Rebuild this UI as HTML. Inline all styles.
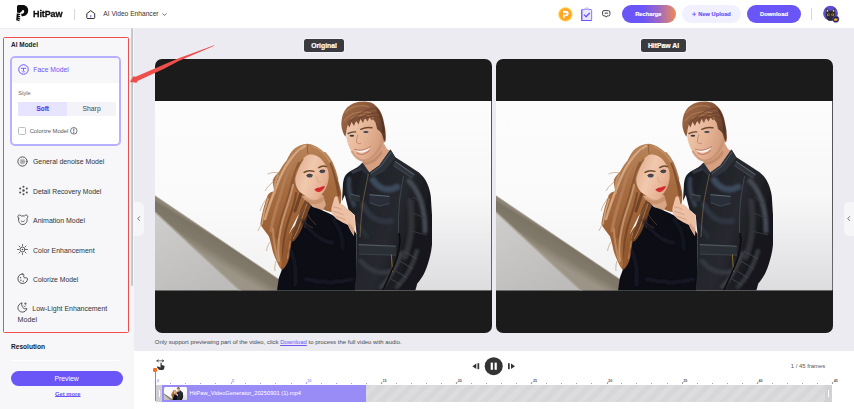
<!DOCTYPE html>
<html lang="en">
<head>
<meta charset="utf-8">
<title>HitPaw AI Video Enhancer</title>
<style>
*{box-sizing:border-box;margin:0;padding:0}
html,body{width:854px;height:409px;overflow:hidden;background:#ebebf1;font-family:"Liberation Sans",sans-serif;color:#333}
#app{position:relative;width:854px;height:409px;overflow:hidden;background:#ebebf1}
.abs{position:absolute}
.t{position:absolute;white-space:nowrap;line-height:1;transform-origin:0 50%;display:block;transform:scaleX(1)}
svg{display:block;overflow:visible}
.t.nb{-webkit-text-stroke:0.15px currentColor}
/* header */
#hdr{left:0;top:0;width:854px;height:28px;background:#fff}
.btn{position:absolute;top:5.3px;height:17.5px;border-radius:9px}
/* sidebar */
#side{left:0;top:28px;width:130.8px;height:381px;background:#f7f7f9;border-top:1px solid #eeeef1}
#sidefill{left:0;top:351px;width:133.5px;height:58px;background:#f7f7f9}
#sbar{left:130.5px;top:28px;width:3px;height:323px;background:#f6f6f8}
#sthumb{left:130.8px;top:28px;width:2.7px;height:257.5px;background:linear-gradient(90deg,#d2d2d6,#bdbdc1);border-radius:1.3px}
#redbox{left:2.7px;top:36.9px;width:126.2px;height:296.4px;border:1.9px solid #ee4f4c;border-radius:1.5px}
#card{left:10.4px;top:56.3px;width:110.8px;height:90.2px;border:2.1px solid #b8b1ff;border-radius:5px;background:#fff;overflow:hidden}
#cardhd{left:0;top:0;width:108px;height:24.6px;background:#f7f7fa}
.mi{color:#333;font-size:7.4px}
.ic{position:absolute;width:11px;height:11px}
.ic *{fill:none;stroke:#4e4e52;stroke-width:1;stroke-linecap:round;stroke-linejoin:round}
.ic .f{fill:#4e4e52;stroke:none}
.ic .f2{fill:#c9c9cc;stroke:#9a9a9e;stroke-width:0.8}
/* main */
.panel{top:58.5px;height:274.5px;background:#1b1b1b;border-radius:7px;overflow:hidden}
.panel svg{position:absolute;left:0;top:42.5px;width:336.5px;height:189.5px}
.tag{top:39px;height:13px;background:#3b3b3f;border-radius:2.5px;color:#fff;font-weight:bold;font-size:6.8px;text-align:center;line-height:13.6px;box-shadow:0 0 0 0.9px rgba(255,255,255,.5);-webkit-text-stroke:0.2px #fff}
#tl{left:133.5px;top:351px;width:720.5px;height:58px;background:#fff}
.tk{position:absolute;top:383.2px;width:1px;height:1.2px;background:#a4a4aa}
.tkM{position:absolute;top:382.3px;width:1px;height:2.3px;background:#8a8a90;transform:skewX(-25deg)}
.tn{position:absolute;top:379.5px;font-size:3.7px;line-height:1;color:#5a5a60;font-weight:bold}
</style>
</head>
<body>
<div id="app">
<svg width="0" height="0" style="position:absolute;left:0;top:0" aria-hidden="true">
<defs>
  <linearGradient id="gBg" x1="0" y1="0" x2="0" y2="1">
    <stop offset="0" stop-color="#fcfcfc"/><stop offset="0.55" stop-color="#fafafa"/><stop offset="1" stop-color="#f1f1f2"/>
  </linearGradient>
  <linearGradient id="gBgR" x1="0" y1="0" x2="0" y2="1">
    <stop offset="0" stop-color="#e0e0e3" stop-opacity="0"/><stop offset="0.5" stop-color="#e0e0e3" stop-opacity="0.1"/><stop offset="1" stop-color="#d6d6da" stop-opacity="0.75"/>
  </linearGradient>
  <linearGradient id="gBand" gradientUnits="userSpaceOnUse" x1="50" y1="128" x2="38" y2="148">
    <stop offset="0" stop-color="#8d8576"/><stop offset="0.12" stop-color="#7b7364"/><stop offset="0.6" stop-color="#817969"/><stop offset="1" stop-color="#9c9587"/>
  </linearGradient>
  <linearGradient id="gConc" x1="0" y1="0" x2="0.6" y2="1">
    <stop offset="0" stop-color="#cfcecc"/><stop offset="1" stop-color="#bdbcba"/>
  </linearGradient>
  <linearGradient id="gHairW" gradientUnits="userSpaceOnUse" x1="135" y1="45" x2="150" y2="170">
    <stop offset="0" stop-color="#b98458"/><stop offset="0.35" stop-color="#a66b3f"/><stop offset="0.7" stop-color="#9a5f34"/><stop offset="1" stop-color="#b0733f"/>
  </linearGradient>
  <linearGradient id="gHairM" gradientUnits="userSpaceOnUse" x1="190" y1="5" x2="231" y2="35">
    <stop offset="0" stop-color="#9c6845"/><stop offset="0.5" stop-color="#84543a"/><stop offset="1" stop-color="#5c3826"/>
  </linearGradient>
  <linearGradient id="gJacket" gradientUnits="userSpaceOnUse" x1="188" y1="60" x2="278" y2="90">
    <stop offset="0" stop-color="#16181d"/><stop offset="0.35" stop-color="#212329"/><stop offset="0.7" stop-color="#27292f"/><stop offset="1" stop-color="#17181c"/>
  </linearGradient>
  <linearGradient id="gSkinM" gradientUnits="userSpaceOnUse" x1="192" y1="30" x2="229" y2="42">
    <stop offset="0" stop-color="#efc6aa"/><stop offset="0.5" stop-color="#e6b395"/><stop offset="0.85" stop-color="#d7a283"/><stop offset="1" stop-color="#c58f70"/>
  </linearGradient>
  <linearGradient id="gSkinW" gradientUnits="userSpaceOnUse" x1="141" y1="70" x2="176" y2="84">
    <stop offset="0" stop-color="#e4b293"/><stop offset="0.35" stop-color="#f1c9ae"/><stop offset="0.8" stop-color="#e7b294"/><stop offset="1" stop-color="#cf9676"/>
  </linearGradient>
  <filter id="b0" x="-10%" y="-10%" width="120%" height="120%"><feGaussianBlur stdDeviation="0.35"/></filter>
  <filter id="b1" x="-10%" y="-10%" width="120%" height="120%"><feGaussianBlur stdDeviation="0.7"/></filter>
  <filter id="b2" x="-20%" y="-20%" width="140%" height="140%"><feGaussianBlur stdDeviation="1.3"/></filter>
  <filter id="b3" x="-30%" y="-30%" width="160%" height="160%"><feGaussianBlur stdDeviation="2.6"/></filter>
  <symbol id="photo" viewBox="0 0 336.5 189.5" preserveAspectRatio="none">
    <rect width="336.5" height="189.5" fill="url(#gBg)"/>
    <rect x="200" y="0" width="136.500" height="189.500" fill="url(#gBgR)"/>
    <!-- ramp -->
    <path d="M0 110 L0 189.500 L87 189.500 Z" fill="url(#gConc)"/>
    <path d="M0 94.600 L124 178.200 L124 189.500 L85 189.500 L0 111 Z" fill="url(#gBand)"/>
    <path d="M0 94.800 L124 178.400" stroke="#b5aea1" stroke-width="0.900" fill="none" filter="url(#b0)"/>
    <path d="M0 111 L85 189.500" stroke="#aaa497" stroke-width="1.600" fill="none" filter="url(#b1)"/>

    <!-- MAN -->
    <g filter="url(#b0)">
      <!-- neck -->
      <path d="M207.500 56 L227.500 40 L232 48 L235.500 50 L227 63 L214.400 72.500 L208.500 66.500 Z" fill="#d6a081"/>
      <path d="M207.500 60 C212 62.500 220 59 226.500 49 L227.500 52.500 C222 61 214 65 208.500 63.500 Z" fill="#bf8868" opacity="0.85"/>
      <!-- jacket -->
      <path d="M187 100 L187.800 86 C188 81 188.600 78 189.600 76 C191 73 193 71.500 196 69.700 L206 64.200 L214.400 71.500 L224.400 64.200 L235.500 48.600 L240 55.900 L252.900 64.200 L263.900 71.500 C268 75 270.500 78.500 272.200 82.500 C274.200 87 275.200 91 275.800 95.400 L277 114 L277 143.400 C276.500 149 275.500 154 274 159 C272.600 164 271 168.500 269 172.700 C267 176.500 264.500 179.800 262.300 182.500 L260.300 189.500 L200.700 189.500 L201.600 133.600 L199.700 114 L193.500 108.700 L189.800 94 Z" fill="url(#gJacket)"/>
    </g>
    <!-- jacket soft highlights -->
    <g filter="url(#b2)" fill="none" stroke-linecap="round">
      <path d="M218 79 C224 88 233 91 242 86" stroke="#3c4c5e" stroke-width="6.500" opacity="0.950"/>
      <path d="M254 80 C264 90 270 108 270 130" stroke="#454952" stroke-width="5"/>
      <path d="M255 100 C258 120 256 140 250 156" stroke="#303137" stroke-width="6"/>
      <path d="M208 104 C214 116 224 122 236 120" stroke="#2d3641" stroke-width="6"/>
      <path d="M206 160 C214 170 226 174 236 170" stroke="#34373f" stroke-width="5"/>
      <path d="M246 152 C242 166 234 178 226 186" stroke="#3c3d43" stroke-width="4"/>
      <path d="M262 150 C258 164 250 178 242 186" stroke="#36373c" stroke-width="4.500"/>
      <path d="M194 78 C193 88 195 96 199 104" stroke="#34414f" stroke-width="4.500"/>
      <path d="M204 124 L212 136" stroke="#2b2f37" stroke-width="4"/>
    </g>
    <g filter="url(#b0)">
      <!-- collar -->
      <path d="M235.500 48.600 L240.500 56.500 L229 70.500 L216.500 77 L214.400 71.500 L224.400 64.200 Z" fill="#2d323b"/>
      <path d="M207.500 61.500 L214.400 71.500 L213.500 76 L203 66 Z" fill="#2a2f37"/>
      <path d="M236.500 50.500 L226 65 L216 72.500" stroke="#55606d" stroke-width="0.900" fill="none"/>
      <!-- zipper -->
      <path d="M213.400 73 C211.500 82 209.500 92 208 100 C206.500 112 205.500 124 205 136" stroke="#6a5a44" stroke-width="0.900" fill="none"/>
      <!-- epaulette -->
      <path d="M240 60 L259.500 73.500 L257.500 77.500 L238 64.500 Z" fill="#30353e"/>
      <path d="M240 60.300 L259.500 73.800" stroke="#67717d" stroke-width="0.900" fill="none"/>
      <path d="M238.400 64.600 L257.400 77.300" stroke="#4a535f" stroke-width="0.700" fill="none"/>
      <path d="M196 70 L205.500 66.500 L207 69 L197.500 73 Z" fill="#323842"/>
      <!-- shoulder seam -->
      <path d="M248.600 75 C247 84 245.500 92 244.600 99 C243.500 110 243 120 243.500 132" stroke="#3c424c" stroke-width="1.100" fill="none"/>
      <path d="M194 76 C193 84 194 92 196 100" stroke="#39404a" stroke-width="0.900" fill="none"/>
      <!-- chest pocket -->
      <path d="M214.400 93.500 L234.500 95.200 L234.700 102.400 L224.500 105.200 L214.400 101.600 Z" fill="#292e37"/>
      <path d="M214.400 93.700 L234.500 95.400" stroke="#5f6b79" stroke-width="1" fill="none"/>
      <path d="M214.600 101.600 L224.500 105.200 L234.600 102.400" stroke="#46505c" stroke-width="0.800" fill="none"/>
      <path d="M195.500 93 L205 95 L204.500 101 L196 99.500 Z" fill="#2b3039"/>
      <path d="M195.500 93.200 L205 95.200" stroke="#55606d" stroke-width="0.800" fill="none"/>
      <!-- lower pocket -->
      <path d="M203.600 143.400 L240.800 145 L241 154.200 L204 153.200 Z" fill="#2c2f36"/>
      <path d="M203.600 143.600 L240.800 145.200" stroke="#565a63" stroke-width="1.100" fill="none"/>
      <path d="M204 153.200 L241 154.200" stroke="#43464e" stroke-width="0.800" fill="none"/>
      <path d="M236.400 153.500 L237.500 171" stroke="#8b6f32" stroke-width="1" fill="none"/>
      <!-- arm outline -->
      <path d="M244 132 C246 142 244 152 240 162 C236 172 232 180 228 189" stroke="#0b0c10" stroke-width="1.600" fill="none"/>
      <!-- arm wrinkles -->
      <path d="M248 150 L262 158 M245 160 L258 168 M241 170 L252 177 M236 178 L246 184" stroke="#41454e" stroke-width="0.900" fill="none"/>
      <path d="M258 96 L270 104 M258 112 L272 118 M256 130 L272 134" stroke="#353942" stroke-width="0.900" fill="none"/>
    </g>
    <!-- man head -->
    <g filter="url(#b0)">
      <path d="M191.300 31.500 L191.300 36 C191.800 39.500 192.600 42.500 193.800 45.200 C195.200 48.500 196.900 51.300 199 53.800 C201.500 57 204.300 59.500 207.500 60.600 C210.500 60.600 213.500 59.600 216.100 58 C219.400 55.500 222.300 52.300 224.600 48.600 C226.200 46 227.400 43 228.100 40.100 L229 30 L224 18 L214 13.500 L200 15 L192.500 22 Z" fill="url(#gSkinM)"/>
      <ellipse cx="228.600" cy="37" rx="2.300" ry="4.800" fill="#cf9674"/>
      <path d="M228.300 34 C229.400 35.500 229.400 38.500 228.300 40" stroke="#a96f52" stroke-width="0.700" fill="none"/>
      <!-- jaw shadow -->
      <path d="M196.500 50 C200 56.500 205 60 210 59.500 C216 58.500 222 52.500 226.500 44" stroke="#c48d6e" stroke-width="2.200" fill="none" opacity="0.700"/>
      <!-- hair -->
      <path d="M190.400 35.800 C188.800 33.500 187.600 31 187 28.100 C186.200 25 186.200 22 186.600 19.500 C187 16 187.800 13.300 189 11 C190 9 191.400 7.200 193 5.800 C194.500 4.400 196.200 3.300 198 2.500 C200 1.500 202 1 204.100 0.700 L210 0.400 C212.200 0.600 214.200 1 216.100 1.600 C218 2.500 219.600 3.600 221 5 C222.400 6.300 223.600 7.700 224.600 9.300 C225.700 11 226.600 13 227.300 15 C228 17 228.500 19 228.900 21.200 L230.200 28 C230.500 29.700 230.600 31.500 230.600 33.200 C230.700 36 230.500 38.500 230.100 40.900 C229.500 40 229 39 228.500 38 C228 36.500 227.400 35 227 33.600 C226.500 32.500 226 31.800 225.500 31 C224.500 30 223.400 29 222.100 28.100 C221.700 25.800 221.100 23.500 220.400 21.200 C219.200 19.300 217.800 17.600 216.100 16.100 C213.800 15.500 211.500 15.200 209.200 15.300 C206.300 15.600 203.500 16.200 200.700 17 C198.300 18.200 196 19.600 193.800 21.200 C193 23 192.400 25 192 27 C191.600 28.500 191.400 30 191.300 31.500 Z" fill="url(#gHairM)"/>
      <path d="M190 12 C196 5 206 3 214 6 M189 20 C195 12 206 9 216 12 M196 18 C204 13 213 13 219 17" stroke="#b07a54" stroke-width="1.300" fill="none" opacity="0.800"/>
      <path d="M222 8 C226 14 228 22 228.500 32" stroke="#4d2e1f" stroke-width="1.800" fill="none" opacity="0.700"/>
      <path d="M192.500 23 L194.500 26.500 L196.500 21 L199 25 L201 19.500 L203.500 23.500 L205.500 18 L208 22 L210 17 L212.500 20.500 L214.500 16.500 L217 19.500 L218.500 17 L220.400 21.200 L216.100 15.500 L209 14.500 L200 16 L193.500 20 Z" fill="#7f5037"/>
      <path d="M222 7 C214 7.500 204 11.500 196 20 M225 12 C217 11 207 14.500 199.500 21.500 M226.500 18 C222 15 215 15 209 17.500" stroke="#633b27" stroke-width="0.900" fill="none" opacity="0.800"/>
      <!-- brows/eyes -->
      <path d="M193 32.600 C195.500 31 198 30.600 200.700 30.900" stroke="#6b4731" stroke-width="1.300" fill="none" stroke-linecap="round"/>
      <path d="M205.800 28.300 C209.500 26.400 213.500 26 216.900 26.800" stroke="#6b4731" stroke-width="1.500" fill="none" stroke-linecap="round"/>
      <ellipse cx="196.900" cy="34.700" rx="2.300" ry="0.950" fill="#3b3638"/>
      <ellipse cx="210.900" cy="31" rx="2.700" ry="1.050" fill="#3b4650"/>
      <!-- nose -->
      <path d="M203 33.500 C202 36.500 201.300 39 201.500 41.200 C202.500 42.600 204.200 42.900 205.800 42.300" stroke="#bd8667" stroke-width="0.900" fill="none"/>
      <!-- mouth -->
      <path d="M199.800 48.600 C204.500 50.600 210 49.600 215.200 46.100 C213.500 51.800 204 54.200 199.800 48.600 Z" fill="#f8f1ee"/>
      <path d="M199.300 48.200 C204.500 50.200 210 49.200 215.700 45.500" stroke="#ad6553" stroke-width="0.800" fill="none"/>
      <path d="M201.500 51.800 C205.500 54.800 211.500 53.500 214.500 49.300" stroke="#c27c68" stroke-width="1.100" fill="none"/>
    </g>

    <!-- WOMAN -->
    <g filter="url(#b0)">
      <!-- hair silhouette -->
      <path d="M152.100 42.800 C158 43 165 47 170 52 C175 57.500 179.400 67 182.400 77 C184.500 84 186.300 90 186.300 93 C186.500 98 186 103 184.500 106 L180 112 L172 110 L152 101.300 L142.100 116 L134.800 130.700 L131.100 142.900 L129.900 157.600 L127.400 167.300 L126.200 168.600 C123 164 120 157 117.700 150.200 C116.500 145 115.500 140 114 135.600 C111 131 107 127 105.400 123.300 C106.500 115 109 104 112.800 94 C115 91 118 90 119.800 90.700 C118.500 86 117.500 82 117.800 79 C119.500 75 122 72.500 123.700 71.200 C126.500 66 129 62 131.500 59.400 C134 54 136.500 50 139.300 47.700 C143 45 147.500 43 152.100 42.800 Z" fill="url(#gHairW)"/>
      <!-- wisps -->
      <path d="M124 72 C120 71 116 71.500 112.500 73 M120 80 C116 82 112 86 110 90 M113 96 C110 99 107 104 105 110 M108 122 C106 124 104 127 103 130 M116 140 C114 142 112 146 111.500 150 M121 160 C120 163 119.500 167 120 170" stroke="#b98a66" stroke-width="0.700" fill="none" opacity="0.850"/>
    </g>
    <g filter="url(#b1)" fill="none" stroke-linecap="round">
      <path d="M150 45 C138 52 128 68 122 84 C118 94 114 104 110 118" stroke="#d7ab86" stroke-width="2.400" opacity="0.900"/>
      <path d="M146 50 C136 60 130 76 126 92 C122 104 118 116 116 130" stroke="#b27e56" stroke-width="3" opacity="0.900"/>
      <path d="M144 62 C138 74 136 88 132 100 C128 112 124 122 122 136" stroke="#855432" stroke-width="2.600" opacity="0.850"/>
      <path d="M138 84 C136 96 130 110 127 122 C124 134 122 146 124 160" stroke="#c8976f" stroke-width="2" opacity="0.900"/>
      <path d="M141 92 C140 104 134 116 131 128 C128 140 127 150 128 162" stroke="#6f4224" stroke-width="2.200" opacity="0.800"/>
      <path d="M113 98 C110 106 108 115 107 123" stroke="#d3a680" stroke-width="1.600" opacity="0.900"/>
      <path d="M118 128 C118 138 120 148 123 160" stroke="#c08a60" stroke-width="2" opacity="0.900"/>
      <path d="M123 74 C120 80 119 86 120 92" stroke="#c59670" stroke-width="1.800" opacity="0.900"/>
      <path d="M146 92 C144 98 142 104 140 110" stroke="#65391f" stroke-width="3" opacity="0.800"/>
      <path d="M176 62 C180 72 182 82 184 94" stroke="#7a4a2a" stroke-width="3" opacity="0.850"/>
      <path d="M170 52 C176 58 180 68 182.500 78" stroke="#a9754e" stroke-width="1.800" opacity="0.850"/>
      <path d="M158 45.500 C165 48 171 54 175 61" stroke="#c6946c" stroke-width="1.600" opacity="0.850"/>
      <path d="M153 44 C152 47 152 50 153.500 53" stroke="#7a4c2e" stroke-width="0.800" opacity="0.800"/>
    </g>
    <g filter="url(#b0)">
      <!-- neck -->
      <path d="M147 95 L152 102 L160 106.500 L167 110 L171 104 L168 94 Z" fill="#d9a685"/>
      <path d="M148 95.500 C153 100 161 102 168.500 95 L169.500 99 C163 105 154 104 149.500 99 Z" fill="#c9936f"/>
      <!-- coat -->
      <path d="M153 101.300 L145 115 L138 130 L133 143 L130.500 157.600 L127.400 167.300 L123.800 177.100 L122 189.500 L200.800 189.500 L201.600 133.600 L198 127.500 L186 118.500 L173.900 112.300 L164.100 108 L158 106 Z" fill="#0d0f19"/>
      <!-- hair over left shoulder edge -->
      <path d="M140 124 C138 132 136 142 135 152 C134 160 131 166 127.400 168.500 L126 168.600 C127 160 128 150 130 142 C132 136 135 130 140 124 Z" fill="#93592f"/>
      <path d="M137 132 C135 140 133.500 150 132.500 158" stroke="#c48f62" stroke-width="0.900" fill="none" opacity="0.900"/>
      <!-- hair strands over coat -->
      <path d="M150 99 C153 101 155 103 156 105 C153 110 151 116 149 122 C147 128 144 134 140 139 C138 141 136 141 135 139 C137 132 140 124 143 116 C145 110 147 104 150 99 Z" fill="#744726" opacity="0.950"/>
      <path d="M152 103 C149 110 147 118 144 126 C142 131 140 135 138 138" stroke="#b57f52" stroke-width="1" fill="none" opacity="0.900"/>
      <path d="M154 106 C152 112 150 120 150 127 M149 108 C152 114 157 120 161 124 M146 118 C150 122 154 125 158 127" stroke="#7d4d2c" stroke-width="0.800" fill="none" opacity="0.700"/>
      <!-- face -->
      <path d="M154 53.600 C156.800 53.200 159.800 53.800 162 55 C164.800 56.600 167.200 58.800 168.900 61.400 C171.200 64.500 172.900 67.800 173.500 71.200 C174 75 173.700 79 172.600 82.900 C171.400 86.600 169.600 89.900 167.300 92.700 C165.400 95.100 163.500 97.500 161.300 98.800 C159.300 99 157.200 98.500 155 97.500 C152.500 96.400 150.200 95 148 93.300 C146.200 92 144.600 90.700 143.300 89.200 C141.900 87.300 140.800 85.400 140 83.200 C139.500 81.700 139.300 80.300 139.300 78.800 C139.500 76.200 140.100 73.500 141 71 C141.900 69 143 67.100 144.200 65.300 C145.300 62.700 146.600 60.300 148 58 C149.800 56 151.800 54.500 154 53.600 Z" fill="url(#gSkinW)"/>
      <!-- hair shadow on left of face -->
      <path d="M148 58 C144.500 63 141.500 69 139.500 77 C139.200 82 140.500 87 143.300 90.700" stroke="#8f5c38" stroke-width="1.600" fill="none" opacity="0.800"/>
      <!-- brows/eyes -->
      <path d="M149.100 71.400 C151.500 69.600 155 69.200 158.900 70.400" stroke="#6e482c" stroke-width="1.500" fill="none" stroke-linecap="round"/>
      <path d="M163.800 66.600 C166.300 64.800 169 64.500 171.300 65.600" stroke="#6e482c" stroke-width="1.500" fill="none" stroke-linecap="round"/>
      <ellipse cx="154.600" cy="74.900" rx="2.900" ry="1.500" fill="#3f4c55"/>
      <path d="M151.500 74.500 C153.500 72.800 156 72.800 157.800 74.300" stroke="#33241d" stroke-width="1" fill="none"/>
      <ellipse cx="167.300" cy="70.700" rx="2.700" ry="1.450" fill="#3f4c55"/>
      <path d="M164.500 70.400 C166.400 68.700 168.600 68.700 170.200 70.100" stroke="#33241d" stroke-width="1" fill="none"/>
      <!-- nose -->
      <path d="M161.600 75.500 C162 77.500 162.300 79.500 162.600 80.700 C163.600 81.600 164.800 81.500 165.800 80.900" stroke="#d8a283" stroke-width="0.800" fill="none"/>
      <!-- lips -->
      <path d="M159.400 88.800 Q162.500 85.800 164.800 86.600 Q167.300 85 170 85.300 Q167.800 90.500 163.800 91.200 Q161 90.900 159.400 88.800 Z" fill="#dd2e30"/>
      <path d="M159.700 88.700 Q165 88.500 169.700 85.600" stroke="#a81c22" stroke-width="0.500" fill="none"/>
      <!-- hand -->
      <path d="M179.500 96.500 C180.500 94.500 182.500 94.800 183 97 L184.500 103 C187 102.500 190 104.500 192 107.500 C195 110 198.500 112.500 199.600 115 L199.800 121 C200.200 125 199.600 129 198.600 131 L199 135 C197 132 194.500 128.500 193 124 C189.500 122.500 185.500 120.500 183 118.800 C179.500 116.800 176.500 113 176.300 109 C176.500 105.500 177.800 103 178.200 101 Z" fill="#ecc0a4"/>
      <path d="M178 106 C181 106.200 184 107 186.500 108.500 M178.500 110.500 C182 111 185.500 112.300 188.500 114 M181.500 115.500 C184.500 116.200 187.500 117.300 190.500 118.800" stroke="#c99477" stroke-width="0.700" fill="none"/>
      <path d="M193 124 C195 128 197 131.500 199 135 L199.500 128 C198 126 196 124 194.500 122 Z" fill="#d9a586"/>
    </g>
    <!-- coat folds -->
    <g filter="url(#b2)" fill="none" stroke-linecap="round" opacity="0.900">
      <path d="M148 120 C156 132 166 140 178 142" stroke="#1b1e2b" stroke-width="3"/>
      <path d="M136 150 C140 160 142 172 140 184" stroke="#1a1d29" stroke-width="3"/>
      <path d="M150 178 C166 182 184 182 198 178" stroke="#1c1f2b" stroke-width="3"/>
      <path d="M178 118 C184 126 188 136 188 148" stroke="#181b27" stroke-width="3"/>
    </g>
  </symbol>
</defs>
</svg>
  <!-- HEADER -->
  <div id="hdr" class="abs"></div>
  <svg class="abs" style="left:16px;top:4.500px;width:12.200px;height:16.300px" viewBox="0 0 24.400 32.600">
    <path d="M2 3 C2 1 4 0 6.500 0 H13.500 C20.500 0 24.400 4.800 24.400 11 C24.400 17.500 19.800 22.400 13.600 22.400 C11.800 22.400 10.600 21.400 10.600 19.800 V17 C13.500 18.200 16.400 16.400 16.400 13.200 C16.400 11 14.800 9.600 12.600 10.400 C12.200 12.600 10.800 14 8.600 14.600 V16.400 L2 15 Z" fill="#0c0c0c"/>
    <path d="M1.600 16.600 L8.400 18 L8.400 20 L3.600 20 L8.400 22.400 L8.400 24.400 L3 24.200 L8.400 27 V29 L2.600 28.600 L8 31.400 L6.800 32.600 L0.400 30.400 Z" fill="#0c0c0c"/>
  </svg>
  <span class="t" id="t_logo" style="transform:scaleX(1.05);-webkit-text-stroke:0.3px #111;left:32.50px;top:9.58px;font-size:8.59px;font-weight:bold;color:#111;letter-spacing:-0.1px">HitPaw</span>
  <div class="abs" style="left:74px;top:8.5px;width:1px;height:11px;background:#d8d8dc"></div>
  <svg class="abs" style="left:86px;top:9.600px;width:9.500px;height:9.200px" viewBox="0 0 19 18.400">
    <path d="M1.600 7.200 L9.500 1.300 L17.400 7.200 V15.500 A1.600 1.600 0 0 1 15.800 17.100 H3.200 A1.600 1.600 0 0 1 1.600 15.500 Z" fill="none" stroke="#222" stroke-width="1.9" stroke-linejoin="round"/>
    <path d="M9.500 11 V14" stroke="#6b5cf0" stroke-width="2" stroke-linecap="round"/>
  </svg>
  <span class="t" id="t_title" style="left:103.30px;top:10.84px;font-size:6.65px;color:#333">AI Video Enhancer</span>
  <svg class="abs" style="left:162px;top:12.6px;width:5px;height:3.4px" viewBox="0 0 10 7"><path d="M1.5 1.5 L5 5 L8.5 1.5" fill="none" stroke="#444" stroke-width="1.6" stroke-linecap="round" stroke-linejoin="round"/></svg>

  <!-- coin -->
  <svg class="abs" style="left:558px;top:6.700px;width:14.800px;height:14.800px" viewBox="0 0 29.600 29.600">
    <defs><radialGradient id="gCoin" cx="0.5" cy="0.5" r="0.5"><stop offset="0" stop-color="#ff9d1c"/><stop offset="0.7" stop-color="#ffa620"/><stop offset="0.86" stop-color="#ffc23a"/><stop offset="1" stop-color="#ffd45a" stop-opacity="0.6"/></radialGradient></defs>
    <circle cx="14.800" cy="14.800" r="14.600" fill="url(#gCoin)"/>
    <path d="M10 7.500 H15.500 C19.300 7.500 21.500 9.900 21.500 13 C21.500 16.300 19 18.400 15.500 18.400 H14.200 V14.800 H15.300 C16.600 14.800 17.300 14.100 17.300 13 C17.300 11.900 16.600 11.300 15.300 11.300 H14.200 V13.200 L10 11.500 Z M10 13.600 L13.400 15 V22.500 L10 21 Z" fill="#fff"/>
  </svg>
  <!-- clipboard -->
  <svg class="abs" style="left:580.600px;top:7px;width:11.400px;height:14.300px" viewBox="0 0 22.800 28.600">
    <rect x="1.500" y="5" width="19.800" height="22" rx="1.200" fill="#e9e6ff" stroke="#8b7df6" stroke-width="2"/>
    <path d="M1.500 5 V27 H21.300" fill="none" stroke="#6a55f6" stroke-width="2.200"/>
    <path d="M7 5 V3 H9.400 C9.400 0.400 13.400 0.400 13.400 3 H15.800 V5 Z" fill="#cfcaff" stroke="#b1a8fa" stroke-width="0.800"/>
    <path d="M6.500 15.800 L10.200 19.400 L16.800 12.400" fill="none" stroke="#6a55f6" stroke-width="2.600" stroke-linecap="round" stroke-linejoin="round"/>
  </svg>
  <!-- chat -->
  <svg class="abs" style="left:601.700px;top:10.300px;width:8.500px;height:8px" viewBox="0 0 17 16">
    <path d="M4 1.200 H13 A2.800 2.800 0 0 1 15.800 4 V9 A2.800 2.800 0 0 1 13 11.800 H10.300 L8.500 14.400 L6.700 11.800 H4 A2.800 2.800 0 0 1 1.200 9 V4 A2.800 2.800 0 0 1 4 1.200 Z" fill="none" stroke="#333" stroke-width="1.800" stroke-linejoin="round"/>
    <path d="M6 6.300 H11" stroke="#333" stroke-width="2" stroke-linecap="round"/>
  </svg>
  <!-- buttons -->
  <div class="btn" style="left:622px;width:53.5px;background:linear-gradient(90deg,#6a55f6 0%,#6a55f6 38%,#9c68c4 68%,#f08a58 100%)"></div>
  <span class="t nb" id="t_rech" style="left:635.20px;top:11.74px;font-size:5.77px;font-weight:bold;color:#fff">Recharge</span>
  <div class="btn" style="left:682px;width:58.5px;background:#f1f0ff"></div>
  <svg class="abs" style="left:692.2px;top:11.9px;width:4.4px;height:4.4px" viewBox="0 0 10 10"><path d="M5 0.500 V9.500 M0.500 5 H9.500" stroke="#6a55f6" stroke-width="1.900" fill="none"/></svg>
  <span class="t nb" id="t_up" style="left:698.30px;top:11.87px;font-size:5.69px;font-weight:bold;color:#6a55f6">New Upload</span>
  <div class="btn" style="left:747px;width:54px;background:#6a55f6"></div>
  <span class="t nb" id="t_dl" style="left:760.00px;top:11.71px;font-size:5.86px;font-weight:bold;color:#fff">Download</span>
  <div class="abs" style="left:811px;top:8px;width:1px;height:12px;background:#d8d8dc"></div>
  <!-- avatar -->
  <svg class="abs" style="left:822.800px;top:6.400px;width:16.400px;height:17px" viewBox="0 0 32.800 34">
    <circle cx="15" cy="14.400" r="14.800" fill="#5d4dd2"/>
    <path d="M5.600 14 L7 4 L12.600 9.400 H17.400 L23 4 L24.400 14 C25.400 20 22.400 25 19.400 28.600 H10.600 C7.600 25 4.600 20 5.600 14 Z" fill="#2b2a31"/>
    <path d="M7.800 6.400 L11.400 10 L7.400 12.400 Z M22.200 6.400 L18.600 10 L22.600 12.400 Z" fill="#c9c6d2"/>
    <path d="M9.400 28.400 C11 25.600 19 25.600 20.600 28.400 C18.600 29.600 11.400 29.600 9.400 28.400 Z" fill="#2b2a31"/>
    <ellipse cx="10.600" cy="17.400" rx="2.700" ry="2.500" fill="#e8951f"/>
    <ellipse cx="19.400" cy="17.400" rx="2.700" ry="2.500" fill="#e8951f"/>
    <ellipse cx="10.900" cy="17.400" rx="1" ry="1.700" fill="#2b2a31"/>
    <ellipse cx="19.100" cy="17.400" rx="1" ry="1.700" fill="#2b2a31"/>
    <path d="M13.400 21.600 H16.600 L15 23.400 Z" fill="#4a4852"/>
    <circle cx="25.600" cy="26.400" r="6.300" fill="#1f1d3a" stroke="#5d4dd2" stroke-width="1.300"/>
    <path d="M21.800 24.400 L23.800 26.200 L25.600 23.400 L27.400 26.200 L29.400 24.400 L28.600 29.400 H22.600 Z" fill="#f7b42a"/>
  </svg>
  <!-- SIDEBAR -->
  <div id="side" class="abs"></div>
  <div id="sidefill" class="abs"></div>
  <div id="sbar" class="abs"></div>
  <div id="sthumb" class="abs"></div>
  <span class="t" id="t_aimodel" style="left:11.00px;top:42.30px;font-size:6.48px;font-weight:bold;color:#222">AI Model</span>
  <div id="card" class="abs"><div id="cardhd" class="abs"></div></div>
  <!-- face icon -->
  <svg class="abs" style="left:18px;top:64px;width:11px;height:11px" viewBox="0 0 22 22">
    <circle cx="11" cy="11" r="9.500" fill="none" stroke="#6a55f6" stroke-width="2"/>
    <path d="M6.500 8.500 H9.500 M12.500 8.500 H15.500 M11 8.500 V13" stroke="#6a55f6" stroke-width="1.900" stroke-linecap="round" fill="none"/>
    <path d="M8 14.800 C9.500 16.600 12.500 16.600 14 14.800" stroke="#6a55f6" stroke-width="1.5" stroke-linecap="round" fill="none"/>
  </svg>
  <span class="t" id="t_face" style="left:33.30px;top:67.48px;font-size:6.81px;color:#6a55f6">Face Model</span>
  <span class="t" id="t_style" style="left:18.20px;top:91.49px;font-size:5.62px;color:#666">Style</span>
  <div class="abs" style="left:18.2px;top:102px;width:49px;height:14px;background:#e7e4ff"></div>
  <div class="abs" style="left:67.2px;top:102px;width:49px;height:14px;background:#f4f4f8"></div>
  <span class="t" id="t_soft" style="-webkit-text-stroke:0.2px #5a45e8;left:36.60px;top:106.45px;font-size:6.33px;font-weight:bold;color:#5a45e8">Soft</span>
  <span class="t" id="t_sharp" style="left:82.50px;top:106.28px;font-size:6.82px;color:#444">Sharp</span>
  <div class="abs" style="left:18.200px;top:127px;width:7.900px;height:7.900px;border:1px solid #bcbcc2;border-radius:1.600px;background:#fff"></div>
  <span class="t" id="t_colchk" style="left:29.70px;top:129.02px;font-size:5.81px;color:#555">Colorize Model</span>
  <svg class="abs" style="left:70.200px;top:127.200px;width:7.600px;height:7.600px" viewBox="0 0 15 15">
    <circle cx="7.500" cy="7.500" r="6.500" fill="none" stroke="#4e4e52" stroke-width="1.500"/>
    <path d="M7.500 3.800 V8.400" stroke="#4e4e52" stroke-width="1.700" stroke-linecap="round"/><circle cx="7.500" cy="11" r="1.100" fill="#4e4e52"/>
  </svg>

  <!-- menu items -->
  <svg class="ic" style="left:17.300px;top:155.900px" viewBox="0 0 22 22"><circle cx="11" cy="11" r="9.300" style="stroke-width:1.900"/><circle class="f2" cx="11" cy="11" r="5.200"/><path d="M8.600 9 H13.400 M8.600 11 H13.400 M8.600 13 H13.400" style="stroke:#8a8a8e;stroke-width:0.900"/></svg>
  <span class="t mi" id="t_m1" style="left:33.00px;top:159.25px;font-size:6.90px">General denoise Model</span>

  <svg class="ic" style="left:17.700px;top:184.700px" viewBox="0 0 22 22"><circle class="f" cx="11" cy="11" r="2.400"/><circle class="f" cx="11" cy="3.400" r="2"/><circle class="f" cx="11" cy="18.600" r="2"/><circle class="f" cx="4.400" cy="7.200" r="2"/><circle class="f" cx="17.600" cy="7.200" r="2"/><circle class="f" cx="4.400" cy="14.800" r="2"/><circle class="f" cx="17.600" cy="14.800" r="2"/></svg>
  <span class="t mi" id="t_m2" style="left:33.00px;top:188.58px;font-size:6.81px">Detail Recovery Model</span>

  <svg class="ic" style="left:17px;top:214.300px;width:11.600px;height:11.600px" viewBox="0 0 22 22"><path d="M3.200 8 C1 7 0.800 3.200 3.400 2.200 C5.400 1.400 7.200 2.400 7.800 4 C9.800 3.400 12.200 3.400 14.200 4 C14.800 2.400 16.600 1.400 18.600 2.200 C21.200 3.200 21 7 18.800 8 C20.400 13.500 17 20 11 20 C5 20 1.600 13.500 3.200 8 Z" style="stroke-width:1.800"/><path d="M7.800 13 C9.400 15.200 12.600 15.200 14.200 13" style="stroke-width:1.600"/></svg>
  <span class="t mi" id="t_m3" style="left:33.00px;top:217.22px;font-size:6.99px">Animation Model</span>

  <svg class="ic" style="left:17.100px;top:243.800px" viewBox="0 0 22 22"><circle cx="11" cy="11" r="5" style="stroke-width:1.900"/><circle class="f" cx="11" cy="11" r="1.600"/><path d="M11 1 V3.400 M11 18.600 V21 M1 11 H3.400 M18.600 11 H21 M3.900 3.900 L5.600 5.600 M16.400 16.400 L18.100 18.100 M3.900 18.100 L5.600 16.400 M16.400 5.600 L18.100 3.900" style="stroke-width:1.700"/></svg>
  <span class="t mi" id="t_m4" style="left:33.00px;top:247.13px;font-size:6.98px">Color Enhancement</span>

  <svg class="ic" style="left:17px;top:272.800px;width:11.400px;height:11.400px" viewBox="0 0 22 22"><path d="M11 1.800 C5.500 1.800 1.800 6 1.800 11 C1.800 16.500 6 20.200 11 20.200 C16.500 20.200 20.200 16 20.200 11.500 C20.200 9 18 8.800 16.500 9.300 C14.200 10 12.200 8.200 13 6 C13.800 3.800 13 1.800 11 1.800 Z" style="stroke-width:1.900"/><circle class="f" cx="6.800" cy="9" r="1.300"/><circle class="f" cx="7.500" cy="14" r="1.300"/><circle class="f" cx="12" cy="16" r="1.300"/></svg>
  <span class="t mi" id="t_m5" style="left:33.00px;top:276.59px;font-size:6.79px">Colorize Model</span>

  <svg class="ic" style="left:16.800px;top:301.800px" viewBox="0 0 22 22"><path d="M9.500 2.200 C5 3.200 1.800 7 1.800 11.500 C1.800 16.500 6 20.200 10.800 20.200 C15.200 20.200 18.800 17.200 19.800 13 C14 15.500 8 10 9.500 2.200 Z" style="stroke-width:1.900"/><path d="M13.500 8 C14.500 9.600 16.500 9.600 17.500 8 M16.800 1.600 V5 M15.100 3.300 H18.500" style="stroke-width:1.500"/></svg>
  <span class="t mi" id="t_m6" style="left:32.30px;top:305.83px;font-size:6.96px">Low-Light Enhancement</span>
  <span class="t mi" id="t_m6b" style="left:17.60px;top:316.98px;font-size:7.13px">Model</span>

  <div id="redbox" class="abs"></div>
  <span class="t" id="t_res" style="left:11.00px;top:344.36px;font-size:6.59px;font-weight:bold;color:#222">Resolution</span>
  <div class="abs" style="left:11px;top:359.800px;width:108px;height:1px;background:#fff"></div>
  <div class="abs" style="left:10.600px;top:370.800px;width:112.400px;height:15.200px;border-radius:7.600px;background:#6a55f6"></div>
  <span class="t" id="t_prev" style="left:54.40px;top:376.07px;font-size:6.86px;color:#fff">Preview</span>
  <span class="t" id="t_more" style="left:55.10px;top:392.22px;font-size:5.81px;font-weight:bold;color:#6a55f6;text-decoration:underline;text-underline-offset:0.2px;text-decoration-thickness:0.7px">Get more</span>
  <!-- MAIN -->
  <div class="abs tag" style="left:304px;width:40px">Original</div>
  <div class="abs tag" style="left:641px;width:45px">HitPaw AI</div>
  <div class="abs panel" style="left:155px;width:336.500px"><svg viewBox="0 0 336.500 189.500"><use href="#photo" width="336.500" height="189.500"/></svg></div>
  <div class="abs panel" style="left:496px;width:336.500px"><svg viewBox="0 0 336.500 189.500"><use href="#photo" width="336.500" height="189.500"/></svg></div>
  <!-- arrow -->
  <svg class="abs" style="left:0;top:0;width:854px;height:409px;pointer-events:none" viewBox="0 0 854 409">
    <path d="M214.100 45.300 L208 47.400 L178.700 58.300 L164 64.500 L154.800 68.600 L135.600 76.800 L133.500 76.200 L129.900 81.900 L136.800 82.700 L137.500 80.900 L154.800 73.100 L164 68.700 L178.700 60.900 L208 48.500 L214.300 45.800 Z" fill="#ef4f4b"/>
  </svg>
  <!-- collapse handles -->
  <div class="abs" style="left:133.500px;top:201.700px;width:10.100px;height:34.500px;background:#f6f6f9;border-radius:0 5px 5px 0"></div>
  <svg class="abs" style="left:137.300px;top:216.300px;width:3.200px;height:5.200px" viewBox="0 0 6.400 10.400"><path d="M5 1.400 L1.600 5.200 L5 9" fill="none" stroke="#555" stroke-width="1.700" stroke-linecap="round" stroke-linejoin="round"/></svg>
  <div class="abs" style="left:844px;top:201.700px;width:10px;height:34.500px;background:#f6f6f9;border-radius:5px 0 0 5px"></div>
  <svg class="abs" style="left:847.300px;top:216.300px;width:3.200px;height:5.200px" viewBox="0 0 6.400 10.400"><path d="M5 1.400 L1.600 5.200 L5 9" fill="none" stroke="#555" stroke-width="1.700" stroke-linecap="round" stroke-linejoin="round"/></svg>
  <span class="t" id="t_note" style="left:154.80px;top:339.26px;font-size:5.99px;color:#4a4a4e">Only support previewing part of the video, click <span style="color:#6a55f6;text-decoration:underline">Download</span> to process the full video with audio.</span>
  <!-- TIMELINE -->
  <div id="tl" class="abs"></div>
  <svg class="abs" style="left:470px;top:356px;width:48px;height:20px" viewBox="0 0 48 20">
    <path d="M2.400 10.200 L6.300 7.400 V13 Z" fill="#333"/><rect x="7.500" y="7.200" width="1.700" height="6" fill="#333"/>
    <circle cx="23.700" cy="10.200" r="9" fill="#333"/>
    <rect x="20.700" y="6.600" width="2.200" height="7.200" fill="#fff"/><rect x="24.600" y="6.600" width="2.200" height="7.200" fill="#fff"/>
    <rect x="38" y="7.200" width="1.700" height="6" fill="#333"/><path d="M45 10.200 L41 7.400 V13 Z" fill="#333"/>
  </svg>
  <span class="t" id="t_frames" style="left:790.80px;top:364.20px;font-size:5.88px;color:#555">1 / 45 frames</span>
  <div class="abs" style="left:156px;top:385.400px;width:676.400px;height:16.200px;background:#d7d7d9;background-image:repeating-linear-gradient(135deg,rgba(255,255,255,0) 0,rgba(255,255,255,0) 5.250px,rgba(255,255,255,.14) 5.250px,rgba(255,255,255,.14) 10.500px)"></div>
  <div class="abs" style="left:824.600px;top:385.400px;width:7.800px;height:16.200px;background:#d2d2d6"></div>
  <div class="abs" style="left:828px;top:390px;width:1.200px;height:7px;background:#fff"></div>
  <div class="abs" style="left:162px;top:385.400px;width:204px;height:16.200px;background:#9a8cf7"></div>
  <div class="abs" style="left:156px;top:385.400px;width:6px;height:16.200px;background:#cfcfd5"></div>
  <div class="abs" style="left:158.600px;top:390px;width:1.200px;height:7px;background:#fff"></div>
  <svg class="abs" style="left:164px;top:387.300px;width:23.200px;height:13px" viewBox="0 0 23.200 13">
    <defs><clipPath id="cpT"><rect width="23.200" height="13" rx="1.600"/></clipPath></defs>
    <g clip-path="url(#cpT)"><use href="#photo" width="23.200" height="13"/></g>
  </svg>
  <span class="t" id="t_clip" style="left:189.50px;top:391.46px;font-size:5.72px;color:#fff">HitPaw_VideoGenerator_20250901 (1).mp4</span>
  <div class="tkM" style="left:155.4px;background:#9d93f6"></div><span class="tn" style="left:156.9px;color:#9d93f6">0</span>
  <div class="tk" style="left:170.1px;background:#a59cf7"></div>
  <div class="tk" style="left:185.2px;background:#a59cf7"></div>
  <div class="tk" style="left:200.2px;background:#a59cf7"></div>
  <div class="tk" style="left:215.3px;background:#a59cf7"></div>
  <div class="tkM" style="left:230.6px;background:#9d93f6"></div><span class="tn" style="left:232.1px;color:#9d93f6">5</span>
  <div class="tk" style="left:245.3px;background:#a59cf7"></div>
  <div class="tk" style="left:260.4px;background:#a59cf7"></div>
  <div class="tk" style="left:275.4px;background:#a59cf7"></div>
  <div class="tk" style="left:290.5px;background:#a59cf7"></div>
  <div class="tkM" style="left:305.8px;background:#9d93f6"></div><span class="tn" style="left:307.3px;color:#9d93f6">10</span>
  <div class="tk" style="left:320.5px;background:#a59cf7"></div>
  <div class="tk" style="left:335.6px;background:#a59cf7"></div>
  <div class="tk" style="left:350.6px;background:#a59cf7"></div>
  <div class="tk" style="left:365.7px;background:#a4a4aa"></div>
  <div class="tkM" style="left:381.0px;background:#8a8a90"></div><span class="tn" style="left:382.5px;color:#5a5a60">15</span>
  <div class="tk" style="left:395.7px;background:#a4a4aa"></div>
  <div class="tk" style="left:410.8px;background:#a4a4aa"></div>
  <div class="tk" style="left:425.8px;background:#a4a4aa"></div>
  <div class="tk" style="left:440.9px;background:#a4a4aa"></div>
  <div class="tkM" style="left:456.2px;background:#8a8a90"></div><span class="tn" style="left:457.7px;color:#5a5a60">20</span>
  <div class="tk" style="left:470.9px;background:#a4a4aa"></div>
  <div class="tk" style="left:486.0px;background:#a4a4aa"></div>
  <div class="tk" style="left:501.0px;background:#a4a4aa"></div>
  <div class="tk" style="left:516.1px;background:#a4a4aa"></div>
  <div class="tkM" style="left:531.4px;background:#8a8a90"></div><span class="tn" style="left:532.9px;color:#5a5a60">25</span>
  <div class="tk" style="left:546.1px;background:#a4a4aa"></div>
  <div class="tk" style="left:561.2px;background:#a4a4aa"></div>
  <div class="tk" style="left:576.2px;background:#a4a4aa"></div>
  <div class="tk" style="left:591.3px;background:#a4a4aa"></div>
  <div class="tkM" style="left:606.6px;background:#8a8a90"></div><span class="tn" style="left:608.1px;color:#5a5a60">30</span>
  <div class="tk" style="left:621.3px;background:#a4a4aa"></div>
  <div class="tk" style="left:636.4px;background:#a4a4aa"></div>
  <div class="tk" style="left:651.4px;background:#a4a4aa"></div>
  <div class="tk" style="left:666.5px;background:#a4a4aa"></div>
  <div class="tkM" style="left:681.8px;background:#8a8a90"></div><span class="tn" style="left:683.3px;color:#5a5a60">35</span>
  <div class="tk" style="left:696.5px;background:#a4a4aa"></div>
  <div class="tk" style="left:711.6px;background:#a4a4aa"></div>
  <div class="tk" style="left:726.6px;background:#a4a4aa"></div>
  <div class="tk" style="left:741.7px;background:#a4a4aa"></div>
  <div class="tkM" style="left:757.0px;background:#8a8a90"></div><span class="tn" style="left:758.5px;color:#5a5a60">40</span>
  <div class="tk" style="left:771.7px;background:#a4a4aa"></div>
  <div class="tk" style="left:786.8px;background:#a4a4aa"></div>
  <div class="tk" style="left:801.8px;background:#a4a4aa"></div>
  <div class="tk" style="left:816.9px;background:#a4a4aa"></div>
  <div class="tkM" style="left:832.2px;background:#8a8a90"></div><span class="tn" style="left:833.7px;color:#5a5a60">45</span>
  <div class="abs" style="left:154.700px;top:369px;width:1.500px;height:31.500px;background:#ff6a1f"></div>
  <div class="abs" style="left:152.900px;top:367.700px;width:4.300px;height:4.800px;background:#ff6a1f;border-radius:1px 1px 1.500px 1.500px"></div>
  <svg class="abs" style="left:156px;top:359px;width:10px;height:12px" viewBox="0 0 20 24">
    <path d="M2 3.600 H15 M2 3.600 L4.500 1.600 M2 3.600 L4.500 5.600 M15 3.600 L12.500 1.600 M15 3.600 L12.500 5.600" stroke="#222" stroke-width="1.300" fill="none" stroke-linecap="round"/>
    <path d="M9 8 C9 6.600 11.400 6.600 11.400 8 V12 L15.500 13 C17 13.400 17.400 14.500 17 16 L16 20 C15.600 21.400 14.600 22 13 22 H8 C6.600 22 6 21.600 5 20.400 L2 16.600 C1.200 15.400 2.600 14.200 4 15.200 L9 17 Z" fill="#333"/>
  </svg>
</div>
</body>
</html>
